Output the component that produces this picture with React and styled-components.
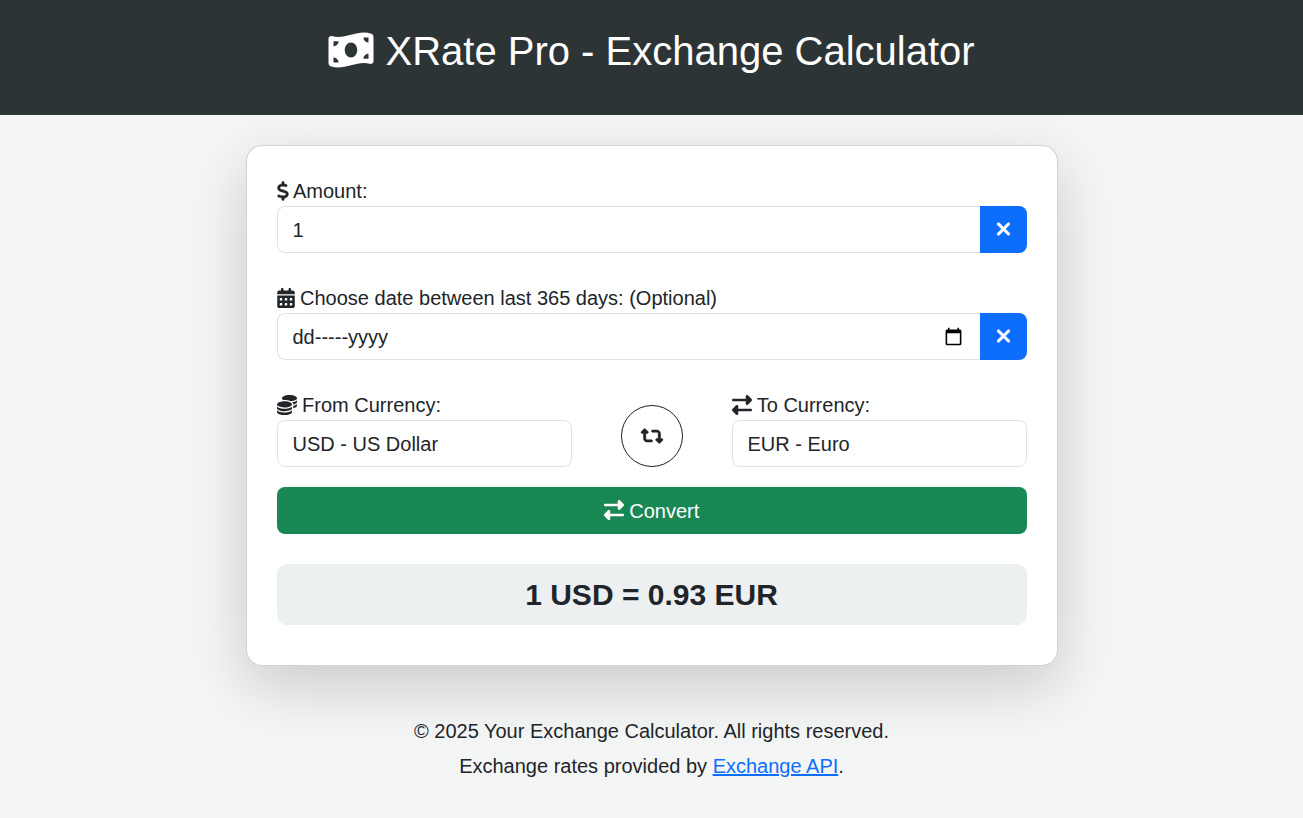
import React, { useState } from "react";
import styled, { createGlobalStyle, css } from "styled-components";
import {
  FaCalendarDays,
  FaCoins,
  FaDollarSign,
  FaMoneyBillWave,
  FaRetweet,
  FaRightLeft,
  FaXmark,
} from "react-icons/fa6";

const GlobalStyle = createGlobalStyle`
  *, *::before, *::after { box-sizing: border-box; }
  body {
    margin: 0;
    background: #f4f6f6;
    color: #212529;
    font: 20px/30px Arial, "Liberation Sans", sans-serif;
  }
  input, select, button { font: inherit; color: inherit; }
  button { cursor: pointer; }
`;

const Icon = styled.svg`
  width: ${(p) => p.$width}px;
  height: 1em;
  vertical-align: -0.125em;
  overflow: visible;
  stroke-width: ${(p) => p.$weight || 0};
`;

const Header = styled.header`
  background: #2d3436;
  color: #fff;
  padding: 27px 16px 40px;
  text-align: center;
`;

const Title = styled.h1`
  margin: 0;
  font-size: 40px;
  line-height: 48px;
  font-weight: 400;
`;

const Main = styled.main`
  display: flex;
  justify-content: center;
  padding: 30px 16px 50px;
`;

const Card = styled.form`
  width: 100%;
  max-width: 812px;
  padding: 30px 30px 40px;
  background: #fff;
  border: 1px solid rgba(0, 0, 0, 0.175);
  border-radius: 16px;
  box-shadow: 0 20px 60px rgba(0, 0, 0, 0.175);
`;

const Field = styled.div`
  margin-bottom: ${(p) => (p.$tight ? 0 : 30)}px;
`;

const Label = styled.label`
  display: block;
`;

const control = css`
  height: 47px;
  padding: 0 15px;
  background: #fff;
  border: 1px solid #dee2e6;
  border-radius: 8px;
`;

const InputGroup = styled.div`
  display: flex;
`;

const InputBox = styled.div`
  ${control}
  flex: 1;
  min-width: 0;
  display: flex;
  align-items: center;
  border-right: 0;
  border-radius: 8px 0 0 8px;
`;

const Input = styled.input`
  flex: 1;
  min-width: 0;
  padding: 0;
  border: 0;
  outline: 0;
  background: transparent;
  appearance: textfield;
  &::placeholder { color: #212529; opacity: 1; }
  &::-webkit-inner-spin-button { appearance: none; }
`;

const PickerButton = styled.button`
  display: flex;
  padding: 2px;
  border: 0;
  background: none;
  color: #000;
`;

const ClearButton = styled.button`
  width: 47px;
  height: 47px;
  padding: 0;
  border: 0;
  border-radius: 0 8px 8px 0;
  background: #0d6efd;
  color: #fff;
`;

const CurrencyRow = styled.div`
  display: grid;
  grid-template-columns: minmax(0, 295fr) minmax(62px, 160fr) minmax(0, 295fr);
  align-items: end;
  margin-bottom: 20px;
`;

const Select = styled.select`
  ${control}
  display: block;
  width: 100%;
  appearance: none;
`;

const SwapButton = styled.button`
  justify-self: center;
  width: 62px;
  height: 62px;
  padding: 0;
  border: 1px solid #212529;
  border-radius: 50%;
  background: transparent;
`;

const ConvertButton = styled.button`
  display: block;
  width: 100%;
  height: 47px;
  padding: 0;
  border: 0;
  border-radius: 8px;
  background: #198754;
  color: #fff;
`;

const Result = styled.output`
  display: block;
  margin-top: 30px;
  padding: 12px;
  border-radius: 10px;
  background: #ecf0f1;
  font-size: 30px;
  line-height: 37px;
  font-weight: 700;
  text-align: center;
`;

const Footer = styled.footer`
  padding: 0 16px 30px;
  text-align: center;
`;

const FooterLine = styled.p`
  margin: 0 0 5px;
`;

const Link = styled.a`
  color: #0d6efd;
`;

function CalendarGlyph() {
  return (
    <svg width="19" height="19" viewBox="0 0 24 24" fill="currentColor" aria-hidden="true">
      <path d="M20 3h-1V1h-2v2H7V1H5v2H4c-1.1 0-2 .9-2 2v16c0 1.1.9 2 2 2h16c1.1 0 2-.9 2-2V5c0-1.1-.9-2-2-2zm0 18H4V8h16v13z" />
    </svg>
  );
}

export default function App() {
  const [amount, setAmount] = useState("1");
  const [date, setDate] = useState("");
  const [from, setFrom] = useState("USD");
  const [to, setTo] = useState("EUR");

  const swap = () => {
    setFrom(to);
    setTo(from);
  };

  const currencies = (
    <>
      <option value="USD">USD - US Dollar</option>
      <option value="EUR">EUR - Euro</option>
    </>
  );

  return (
    <>
      <GlobalStyle />
      <Header>
        <Title>
          <Icon as={FaMoneyBillWave} $width={46} /> XRate Pro - Exchange Calculator
        </Title>
      </Header>
      <Main>
        <Card onSubmit={(e) => e.preventDefault()}>
          <Field>
            <Label htmlFor="amount">
              <Icon as={FaDollarSign} $width={12} $weight={12} /> Amount:
            </Label>
            <InputGroup>
              <InputBox>
                <Input id="amount" type="number" value={amount} onChange={(e) => setAmount(e.target.value)} />
              </InputBox>
              <ClearButton type="button" aria-label="Clear amount" onClick={() => setAmount("")}>
                <Icon as={FaXmark} $width={15} $weight={20} />
              </ClearButton>
            </InputGroup>
          </Field>
          <Field>
            <Label htmlFor="date">
              <Icon as={FaCalendarDays} $width={18} /> Choose date between last 365 days: (Optional)
            </Label>
            <InputGroup>
              <InputBox>
                <Input
                  id="date"
                  type="text"
                  placeholder="dd-----yyyy"
                  value={date}
                  onChange={(e) => setDate(e.target.value)}
                />
                <PickerButton type="button" aria-label="Open calendar">
                  <CalendarGlyph />
                </PickerButton>
              </InputBox>
              <ClearButton type="button" aria-label="Clear date" onClick={() => setDate("")}>
                <Icon as={FaXmark} $width={15} $weight={20} />
              </ClearButton>
            </InputGroup>
          </Field>
          <CurrencyRow>
            <Field $tight>
              <Label htmlFor="from">
                <Icon as={FaCoins} $width={20} /> From Currency:
              </Label>
              <Select id="from" value={from} onChange={(e) => setFrom(e.target.value)}>
                {currencies}
              </Select>
            </Field>
            <SwapButton type="button" aria-label="Swap currencies" onClick={swap}>
              <Icon as={FaRetweet} $width={22} $weight={12} />
            </SwapButton>
            <Field $tight>
              <Label htmlFor="to">
                <Icon as={FaRightLeft} $width={20} /> To Currency:
              </Label>
              <Select id="to" value={to} onChange={(e) => setTo(e.target.value)}>
                {currencies}
              </Select>
            </Field>
          </CurrencyRow>
          <ConvertButton type="submit">
            <Icon as={FaRightLeft} $width={20} /> Convert
          </ConvertButton>
          <Result>1 USD = 0.93 EUR</Result>
        </Card>
      </Main>
      <Footer>
        <FooterLine>© 2025 Your Exchange Calculator. All rights reserved.</FooterLine>
        <FooterLine>
          Exchange rates provided by <Link href="#api">Exchange API</Link>.
        </FooterLine>
      </Footer>
    </>
  );
}
